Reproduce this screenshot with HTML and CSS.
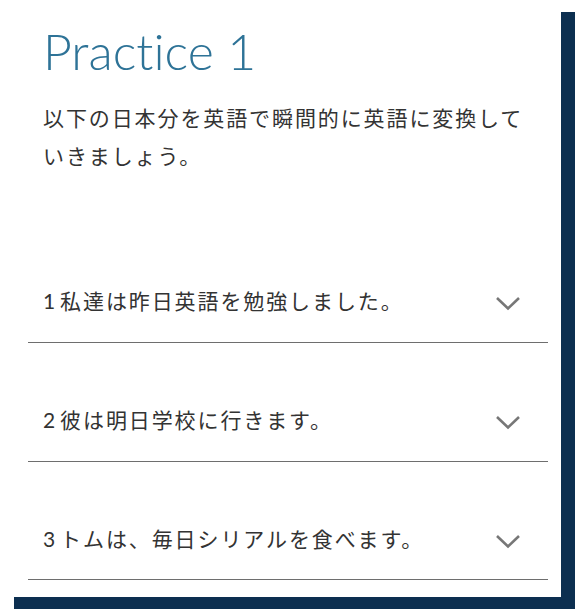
FILE: index.html
```html
<!DOCTYPE html>
<html lang="ja">
<head>
<meta charset="utf-8">
<link rel="stylesheet" href="styles.css">
</head>
<body>
<div class="card">
  <h1 class="title">Practice 1</h1>
  <p class="lead">以下の日本分を英語で瞬間的に英語に変換していきましょう。</p>
  <ul class="accordion">
    <li class="item"><span class="q"><span class="num">1</span>私達は昨日英語を勉強しました。</span>
      <svg class="chev" width="26" height="15" viewBox="0 0 26 15"><path d="M2 2 L13 12.5 L24 2" fill="none" stroke="#777" stroke-width="2.6"/></svg></li>
    <li class="item"><span class="q"><span class="num">2</span>彼は明日学校に行きます。</span>
      <svg class="chev" width="26" height="15" viewBox="0 0 26 15"><path d="M2 2 L13 12.5 L24 2" fill="none" stroke="#777" stroke-width="2.6"/></svg></li>
    <li class="item"><span class="q"><span class="num">3</span>トムは、毎日シリアルを食べます。</span>
      <svg class="chev" width="26" height="15" viewBox="0 0 26 15"><path d="M2 2 L13 12.5 L24 2" fill="none" stroke="#777" stroke-width="2.6"/></svg></li>
  </ul>
</div>
</body>
</html>
```
FILE: styles.css
```css
html, body {
  margin: 0;
  padding: 0;
  background: #fff;
}
body {
  font-family: Lato, "Noto Sans CJK JP", sans-serif;
  color: #333;
  height: 610px;
  overflow: hidden;
}
.card {
  width: 561px;
  height: 597px;
  background: #fff;
  box-shadow: 14px 12px 0 #0c2f50;
  box-sizing: border-box;
  padding-top: 21px;
}
.title {
  margin: 0;
  padding-left: 43px;
  font-family: Lato, sans-serif;
  font-weight: 300;
  font-size: 50px;
  line-height: 60px;
  color: #2e7397;
  font-variant-ligatures: none;
  font-feature-settings: "liga" 0, "dlig" 0;
}
.lead {
  margin: 18px 0 0;
  padding: 0 20px 0 43px;
  font-size: 21px;
  line-height: 38px;
  letter-spacing: 1.9px;
  color: #333;
}
.accordion {
  list-style: none;
  margin: 49px 13px 0 28px;
  padding: 0;
}
.item {
  display: flex;
  align-items: center;
  justify-content: space-between;
  padding: 62px 27px 26px 15px;
  border-bottom: 1px solid #6e6e6e;
  height: 30px;
}
.item:last-child {
  padding-bottom: 25px;
}
.q {
  font-size: 21px;
  line-height: 30px;
  letter-spacing: 1.9px;
  color: #333;
}
.num {
  margin-right: 3px;
}
.chev {
  display: block;
  margin-top: 4px;
}
```
